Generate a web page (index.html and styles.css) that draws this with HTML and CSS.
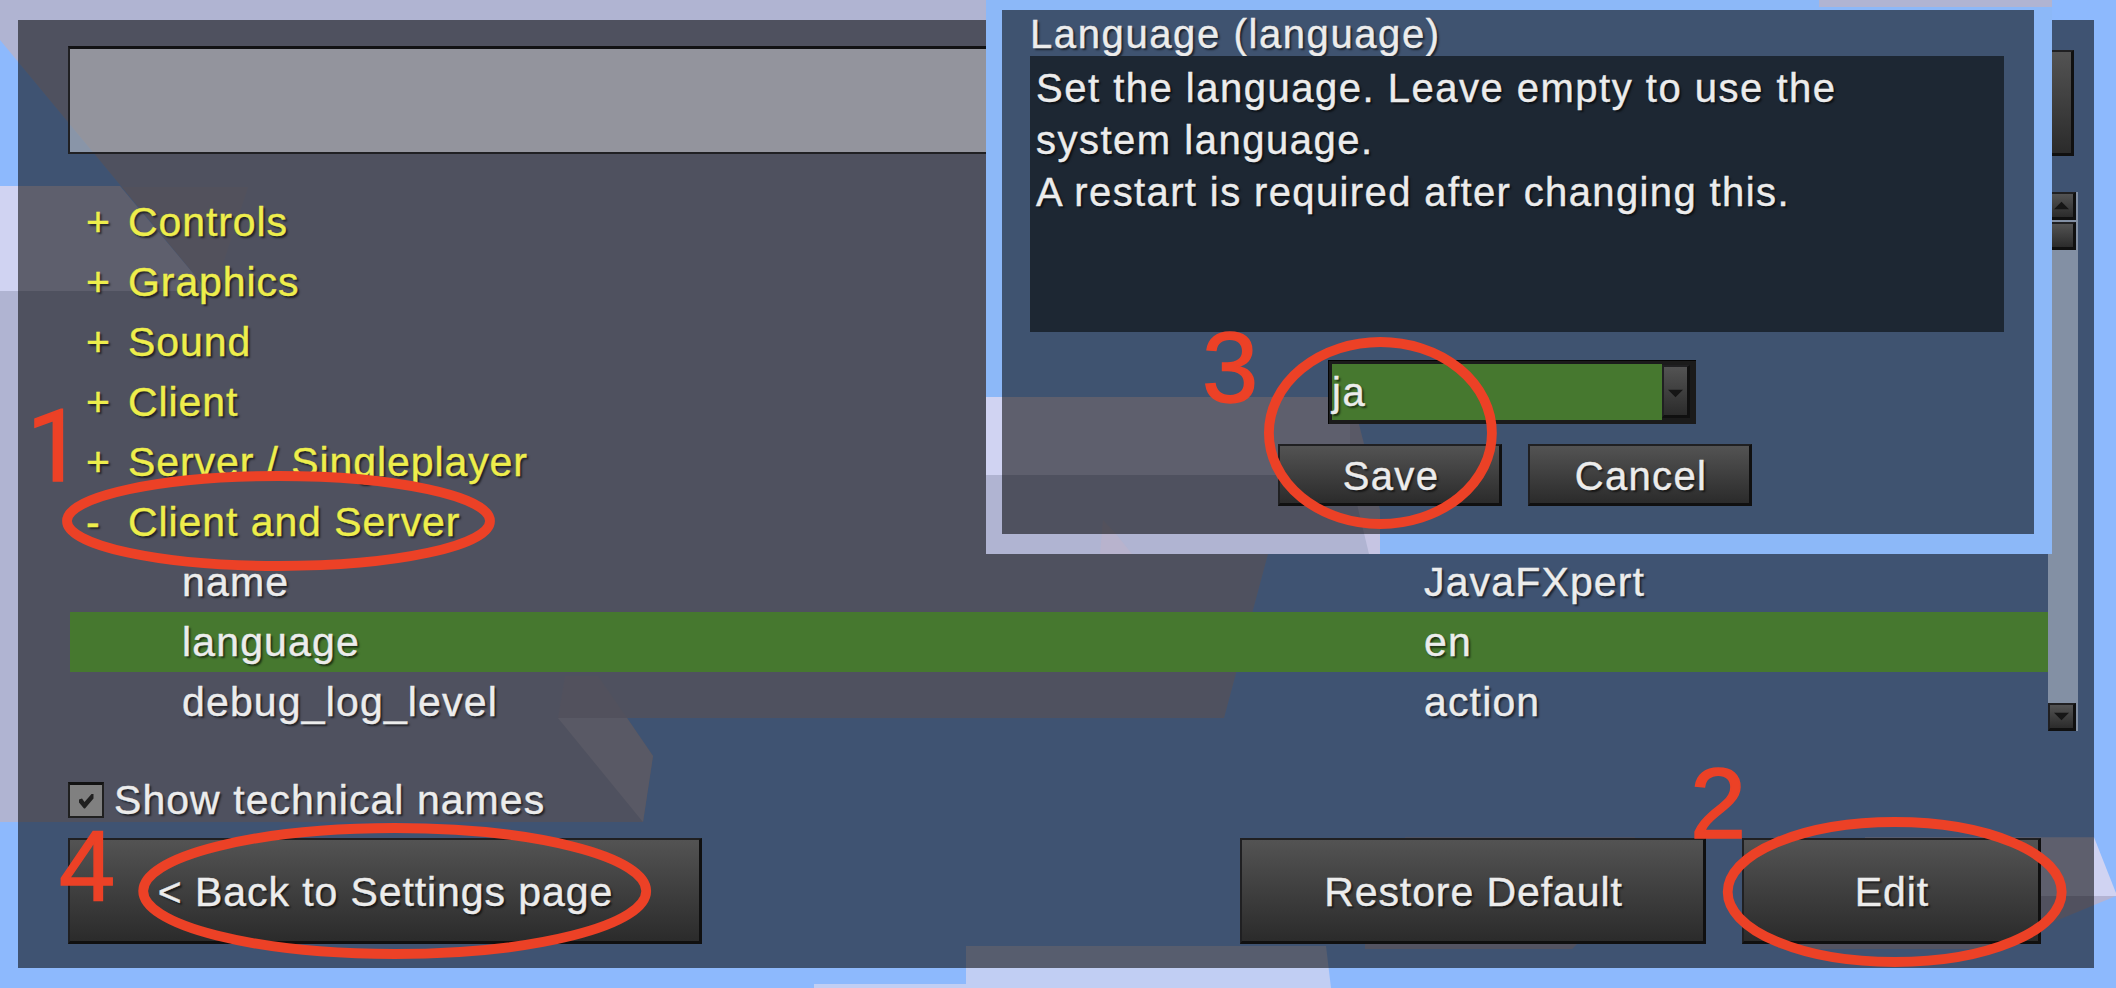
FILE: index.html
```html
<!DOCTYPE html>
<html lang="en">
<head>
<meta charset="utf-8">
<title>Settings</title>
<link rel="stylesheet" href="styles.css">
</head>
<body>
<div class="screen">
  <svg class="sky" viewBox="0 0 2116 988" aria-hidden="true">
    <rect width="2116" height="988" fill="#8db9fd"/>
    <path fill="#b0b4d2" d="M0 0H1380L1268 554L1224 718H627L653 756L643 822H0V291H208L0 40Z"/>
    <path fill="#d0d3f2" d="M0 186H120L208 291H0Z"/>
    <path fill="#b7b3cd" d="M122 187H248L214 291H208Z"/>
    <path fill="#c6c6e0" d="M558 718H627L653 756L643 822Z"/>
    <path fill="#b5b3cf" d="M565 676H598L627 718H558Z"/>
    <path fill="#c1cef3" d="M966 946H1326L1331 988H966ZM814 984H966V988H814Z"/>
    <path fill="#b9b9d8" d="M1365 944H1577L1572 949H1365ZM1775 944H2015L2000 949H1780ZM1405 837.2H1635V839H1405Z"/>
    <path fill="#d0d3f2" d="M1865 837.2H2094L2116 893V896H1865Z"/>
    <path fill="#b3b3d3" d="M1990 896H2116L2058 920L1990 944Z"/>
  </svg>

  <main class="panel">
    <div class="search-row">
      <div class="field"></div>
      <div class="button search-button"></div>
    </div>
    <div class="table">
      <div class="rows">
        <div class="row group"><span class="sign">+</span>Controls</div>
        <div class="row group"><span class="sign">+</span>Graphics</div>
        <div class="row group"><span class="sign">+</span>Sound</div>
        <div class="row group"><span class="sign">+</span>Client</div>
        <div class="row group"><span class="sign">+</span>Server / Singleplayer</div>
        <div class="row group"><span class="sign">-</span>Client and Server</div>
        <div class="row item"><span class="key">name</span><span>JavaFXpert</span></div>
        <div class="row item selected"><span class="key">language</span><span>en</span></div>
        <div class="row item"><span class="key">debug_log_level</span><span>action</span></div>
      </div>
      <div class="scrollbar">
        <div class="button arrow"><svg viewBox="0 0 16 8"><path d="M8 0L16 8H0Z"/></svg></div>
        <div class="button thumb"></div>
        <div class="button arrow down"><svg viewBox="0 0 16 8"><path d="M0 0H16L8 8Z"/></svg></div>
      </div>
    </div>
    <div class="check-row">
      <span class="checkbox"><svg viewBox="0 0 16 16"><path d="M1 6.5L4 5.5L6.5 9L13.5 1H15.5V5.5L7 15.5H6L1 9.5Z"/></svg></span>
      <span>Show technical names</span>
    </div>
    <div class="actions">
      <div class="button back">&lt; Back to Settings page</div>
      <div class="button restore">Restore Default</div>
      <div class="button edit">Edit</div>
    </div>
  </main>

  <section class="dialog">
    <svg class="dialog-sky" viewBox="0 0 1066 554" aria-hidden="true">
      <rect width="1066" height="554" fill="#8cb8f8"/>
      <path fill="#d0d3f2" d="M0 397H364V475H0Z"/>
      <path fill="#c6c5e3" d="M364 397H366L378 444L394 510V554H364Z"/>
      <path fill="#b0b4d2" d="M0 475H364L383 554H0Z"/>
      <path fill="#b8b3cd" d="M117 520L130 534L146 554H114Z"/>
      <rect x="833" width="233" height="7" fill="#b0b4d2"/>
    </svg>
    <div class="dialog-body">
      <div class="title">Language (language)</div>
      <div class="description">Set the language. Leave empty to use the<br>system language.<br><span class="note">A restart is required after changing this.</span></div>
      <div class="combo">
        <div class="combo-value">ja</div>
        <div class="button combo-button"><svg viewBox="0 0 16 8"><path d="M0 0H16L8 8Z"/></svg></div>
      </div>
      <div class="dialog-actions">
        <div class="button">Save</div>
        <div class="button">Cancel</div>
      </div>
    </div>
  </section>

  <svg class="marks" viewBox="0 0 2116 988">
    <ellipse cx="278.5" cy="521" rx="211.5" ry="45"/>
    <ellipse cx="1894.7" cy="892" rx="167" ry="70"/>
    <ellipse cx="1380.4" cy="433" rx="111.5" ry="91"/>
    <ellipse cx="394.7" cy="891" rx="251.5" ry="63"/>
    <text class="one" x="26.5" y="480.5">1</text>
    <text x="1690" y="838">2</text>
    <text x="1202" y="402">3</text>
    <text x="59" y="901">4</text>
  </svg>
</div>
</body>
</html>
```

FILE: styles.css
```css
* { box-sizing: border-box; }

body {
  margin: 0;
  font-family: "Liberation Sans", Arial, sans-serif;
  font-size: 41px;
  letter-spacing: .92px;
  color: #ececec;
}

.screen {
  position: relative;
  width: 2116px;
  height: 988px;
  padding: 20px 22px 20px 18px;
  overflow: hidden;
  text-shadow: 2px 2px 2px rgba(0, 0, 0, .6);
  -webkit-text-stroke: .4px currentColor;
}

.sky, .marks, .dialog-sky {
  position: absolute;
  inset: 0;
  width: 100%;
  height: 100%;
}

.panel {
  position: relative;
  height: 948px;
  padding: 26px 16px 0 50px;
  background: rgba(0, 0, 0, .55);
}

.search-row {
  display: flex;
  justify-content: space-between;
  height: 146px;
  padding-right: 4px;
}

.field {
  width: 1500px;
  height: 108px;
  border: 2px solid #202023;
  border-top: 3px solid #121214;
  background: rgba(255, 255, 255, .39);
}

.button {
  display: flex;
  align-items: center;
  justify-content: center;
  white-space: nowrap;
  border: 2px solid #202022;
  border-right: 3px solid #101010;
  border-bottom: 3px solid #101010;
  background: linear-gradient(#535353, #2b2b2b);
}

.search-button {
  width: 220px;
  height: 106px;
  margin-top: 4px;
}

.table {
  display: flex;
  height: 540px;
  padding-left: 2px;
}

.rows { width: 1978px; }

.row {
  display: flex;
  height: 60px;
  line-height: 60px;
  white-space: nowrap;
}

.group { padding-left: 16px; color: #eeee4c; }
.sign { width: 42px; }
.item { padding-left: 112px; letter-spacing: 1.15px; }
.key { width: 1242px; }
.selected { background: #46782f; }

.scrollbar {
  display: flex;
  flex-direction: column;
  gap: 2px;
  width: 30px;
  height: 539px;
  padding-right: 2px;
  background: rgba(255, 255, 255, .355);
}

.arrow { height: 28px; }
.arrow svg { width: 15px; height: 9px; }
.thumb { height: 28px; }
.down { margin-top: auto; }
.button path { fill: #161616; }

.check-row {
  display: flex;
  align-items: center;
  gap: 10px;
  height: 106px;
  padding-top: 30px;
  letter-spacing: 1.05px;
}

.checkbox {
  display: flex;
  align-items: center;
  justify-content: center;
  width: 36px;
  height: 36px;
  border: 2px solid #202020;
  border-top: 3px solid #121212;
  background: #808080;
}

.checkbox svg { width: 16px; height: 16px; }
.checkbox path { fill: #202020; }

.actions {
  display: flex;
  height: 106px;
}

.actions .button { padding: 3px 0 0 2px; }
.back { width: 634px; }
.restore { width: 466px; margin-left: 538px; }
.edit { width: 299px; margin-left: 36px; }

.dialog {
  position: absolute;
  left: 986px;
  top: 0;
  width: 1066px;
  height: 554px;
  padding: 10px 18px 20px 16px;
  font-size: 40px;
  letter-spacing: 1.5px;
}

.dialog-body {
  position: relative;
  display: flex;
  flex-direction: column;
  height: 524px;
  padding-left: 28px;
  background: rgba(0, 0, 0, .55);
}

.title {
  height: 46px;
  line-height: 48px;
  letter-spacing: 1.6px;
}

.description {
  width: 974px;
  height: 276px;
  padding: 6px;
  line-height: 52px;
  white-space: nowrap;
  background: #1d2733;
}

.note { letter-spacing: 1.38px; }

.combo {
  display: flex;
  width: 368px;
  height: 64px;
  margin: 28px 0 0 298px;
  padding: 3px 6px 4px 3px;
  background: #1b1b1b;
  border-top: 1px solid #050505;
  border-left: 1px solid #050505;
}

.combo-value {
  width: 330px;
  height: 56px;
  line-height: 56px;
  background: #46782f;
}

.combo-button { width: 28px; height: 53px; margin-top: 1px; padding-top: 4px; }
.combo-button svg { width: 15px; height: 9px; }

.dialog-actions {
  display: flex;
  gap: 26px;
  margin: 20px 0 0 248px;
}

.dialog-actions .button {
  width: 224px;
  height: 62px;
  padding: 3px 0 0 3px;
  letter-spacing: 1.3px;
}

.marks ellipse {
  fill: none;
  stroke: #ec4126;
  stroke-width: 9.8px;
}

.marks text {
  font-size: 101px;
  letter-spacing: 0;
  fill: #ec4126;
  stroke: #ec4126;
  stroke-width: 1.4px;
  -webkit-text-stroke: 1.4px #ec4126;
  text-shadow: none;
}

.marks .one { font-family: Roboto, sans-serif; }
```
